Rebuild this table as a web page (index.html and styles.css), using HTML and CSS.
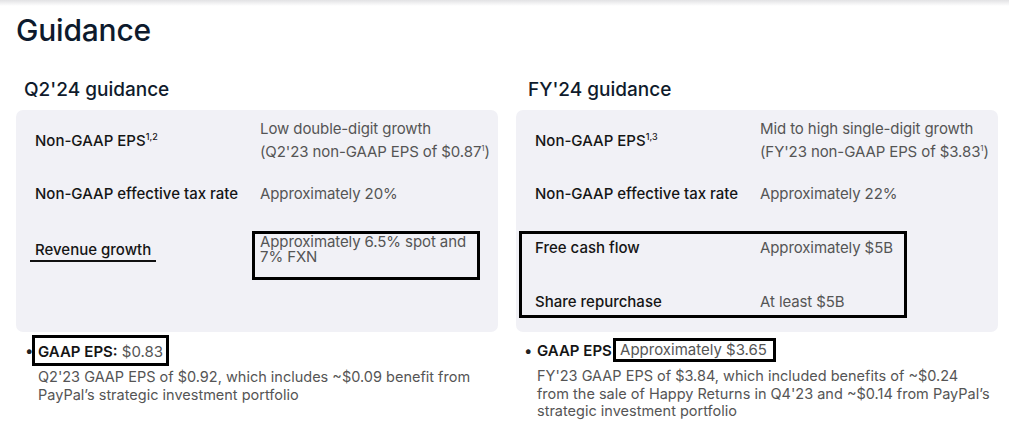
FILE: index.html
```html
<!DOCTYPE html>
<html>
<head>
<meta charset="utf-8">
<link rel="stylesheet" href="styles.css">
</head>
<body>
<div class="topbar"></div>
<h1 class="title">Guidance</h1>
<div class="cols">
  <section class="col">
    <h2 class="subtitle">Q2'24 guidance</h2>
    <div class="panel">
      <div class="row row-eps">
        <div class="label">Non-GAAP EPS<sup>1,2</sup></div>
        <div class="value">Low double-digit growth<br>(Q2'23 non-GAAP EPS of $0.87<sup>1</sup>)</div>
      </div>
      <div class="row row-tax">
        <div class="label">Non-GAAP effective tax rate</div>
        <div class="value">Approximately 20%</div>
      </div>
      <div class="row row-rev">
        <div class="label"><span class="underlined">Revenue growth</span></div>
        <div class="value boxed-value">Approximately 6.5% spot and<br>7% FXN</div>
      </div>
    </div>
    <div class="bullet">
      <span class="dot">•</span>
      <div class="bullet-body">
        <div class="bullet-head"><span class="hl hl-left"><b>GAAP EPS:</b> $0.83</span></div>
        <p class="note">Q2'23 GAAP EPS of $0.92, which includes ~$0.09 benefit from<br>PayPal’s strategic investment portfolio</p>
      </div>
    </div>
  </section>
  <section class="col">
    <h2 class="subtitle subtitle-right">FY'24 guidance</h2>
    <div class="panel">
      <div class="row row-eps">
        <div class="label">Non-GAAP EPS<sup>1,3</sup></div>
        <div class="value">Mid to high single-digit growth<br>(FY'23 non-GAAP EPS of $3.83<sup>1</sup>)</div>
      </div>
      <div class="row row-tax">
        <div class="label">Non-GAAP effective tax rate</div>
        <div class="value">Approximately 22%</div>
      </div>
      <div class="boxed-rows">
        <div class="row row-fcf">
          <div class="label">Free cash flow</div>
          <div class="value">Approximately $5B</div>
        </div>
        <div class="row row-buy">
          <div class="label">Share repurchase</div>
          <div class="value">At least $5B</div>
        </div>
      </div>
    </div>
    <div class="bullet bullet-right">
      <span class="dot">•</span>
      <div class="bullet-body">
        <div class="bullet-head"><b>GAAP EPS</b> <span class="hl hl-right">Approximately $3.65</span></div>
        <p class="note">FY'23 GAAP EPS of $3.84, which included benefits of ~$0.24<br>from the sale of Happy Returns in Q4'23 and ~$0.14 from PayPal’s<br>strategic investment portfolio</p>
      </div>
    </div>
  </section>
</div>
</body>
</html>
```

FILE: styles.css
```css
* { box-sizing: border-box; }
html, body { margin: 0; padding: 0; background: #ffffff; }
body {
  font-family: Inter, "Noto Sans", "Liberation Sans", sans-serif;
  color: #151515;
  width: 1009px;
  height: 436px;
  overflow: hidden;
}
.topbar {
  height: 6px;
  background: linear-gradient(#e2e2e4, #ffffff);
}
.title {
  margin: 6px 0 0 16px;
  font-size: 30px;
  line-height: 36px;
  font-weight: 500;
  color: #0d1a2d;
  letter-spacing: -0.2px;
}
.cols {
  display: grid;
  grid-template-columns: 482px 482px;
  column-gap: 18px;
  margin: 0 0 0 16px;
}
.subtitle {
  margin: 30px 0 8px 8px;
  font-size: 19px;
  line-height: 24px;
  font-weight: 500;
  color: #0f1b2c;
}
.subtitle-right { margin-left: 12px; }
.panel {
  background: #f1f1f6;
  border-radius: 7px;
  height: 222px;
  padding: 7px 0 0 19px;
}
.row {
  display: grid;
  grid-template-columns: 225px 1fr;
  align-items: center;
  font-size: 15px;
  line-height: 23px;
}
.label { font-weight: 500; color: #151515; }
.value { font-weight: 400; color: #555555; letter-spacing: -0.1px; }
sup {
  font-size: 9px;
  line-height: 0;
  vertical-align: 6px;
}
.value sup { vertical-align: 6px; font-size: 8px; }
.row-tax { margin-top: 19px; }
.row-rev {
  margin-top: 26px;
  align-items: start;
}
.row-rev .label { margin-top: 7px; }
.underlined {
  display: inline-block;
  margin-left: -5px;
  padding: 0 5px 0 5px;
  line-height: 20px;
  border-bottom: 2px solid #111;
}
.boxed-value {
  margin-left: -8px;
  width: 228px;
  height: 49px;
  border: 3px solid #000;
  padding: 0 0 0 5px;
  line-height: 15px;
}
.boxed-rows {
  margin: 26px 0 0 -16px;
  width: 388px;
  height: 87px;
  border: 3px solid #000;
  padding: 2px 0 0 13px;
}
.boxed-rows .row { grid-template-columns: 225px 1fr; }
.row-buy { margin-top: 31px; }
.bullet {
  display: flex;
  margin-top: 3px;
  padding-left: 9px;
  font-size: 15px;
}
.bullet-right { padding-left: 8px; }
.dot {
  width: 13px;
  line-height: 28px;
  padding-top: 2px;
  color: #222;
}
.bullet-body { flex: 1; }
.bullet-head {
  line-height: 22px;
  height: 28px;
  color: #151515;
}
.bullet-head b { font-weight: 600; }
.hl {
  display: inline-block;
  border: 3px solid #000;
  padding: 3px 3px 0 3px;
  color: #555555;
  font-weight: 400;
}
.hl-left { margin-left: -6px; }
.hl b { color: #151515; }
.bullet-right .bullet-head { padding-top: 4px; line-height: 22px; }
.hl-right {
  padding: 0 6px 0 4px;
  line-height: 18px;
  margin-left: -3px;
  position: relative;
  top: -1px;
}
.note {
  margin: 5px 0 0 0;
  font-size: 14.5px;
  line-height: 17.5px;
  color: #555555;
  white-space: nowrap;
}
.bullet-right .note { margin-top: 4px; }
```
